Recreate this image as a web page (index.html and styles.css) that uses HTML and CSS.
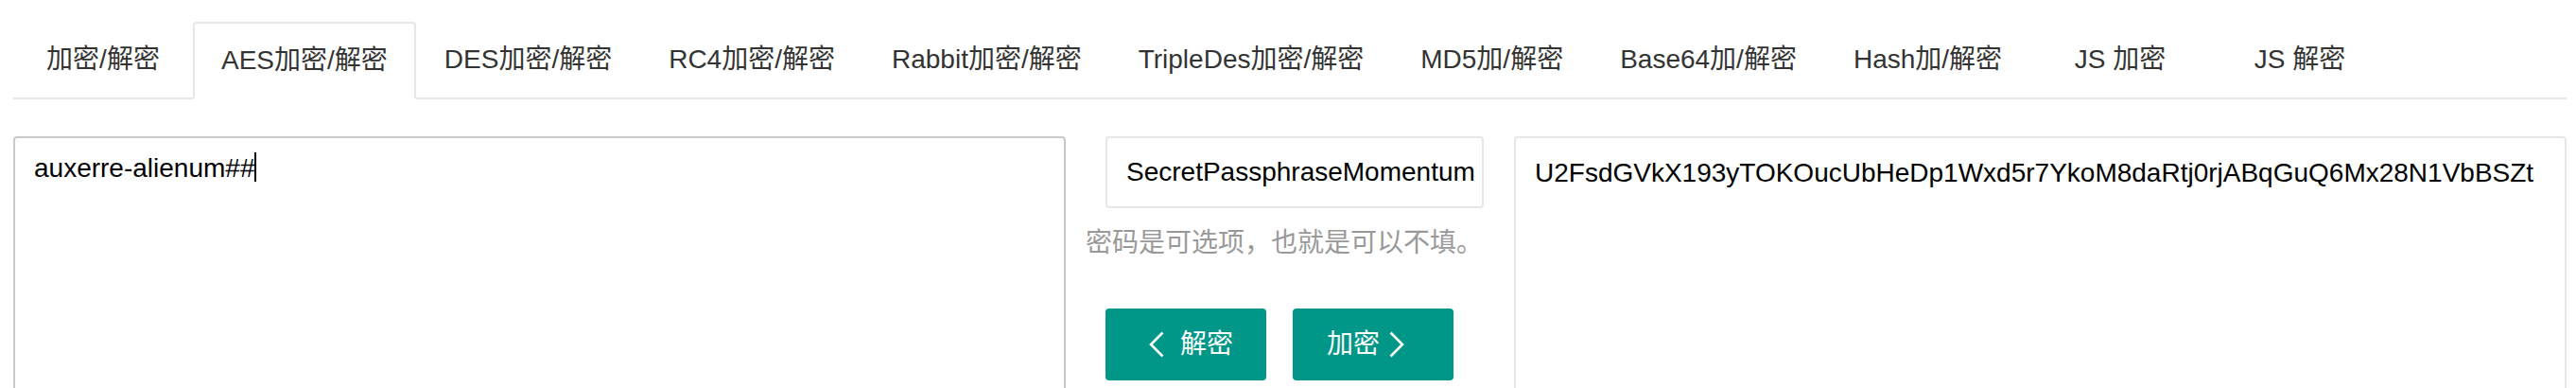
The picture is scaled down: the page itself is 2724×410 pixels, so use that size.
FILE: index.html
```html
<!DOCTYPE html>
<html lang="zh-CN">
<head>
<meta charset="utf-8">
<title>AES加密/解密</title>
<link rel="stylesheet" href="styles.css">
</head>
<body>
<div class="page">
  <ul class="tabs">
    <li class="tab">加密/解密</li>
    <li class="tab active">AES加密/解密</li>
    <li class="tab">DES加密/解密</li>
    <li class="tab">RC4加密/解密</li>
    <li class="tab">Rabbit加密/解密</li>
    <li class="tab">TripleDes加密/解密</li>
    <li class="tab">MD5加/解密</li>
    <li class="tab">Base64加/解密</li>
    <li class="tab">Hash加/解密</li>
    <li class="tab">JS 加密</li>
    <li class="tab">JS 解密</li>
  </ul>
  <div class="panel">
    <div class="box box-focus">auxerre-alienum##<span class="caret"></span></div>
    <div class="middle">
      <input class="pass" type="text" value="SecretPassphraseMomentum">
      <div class="hint">密码是可选项，也就是可以不填。</div>
      <div class="actions">
        <button class="btn btn-dec"><svg class="chev" width="16" height="28" viewBox="0 0 16 28"><polyline points="14.5,1.5 2,14 14.5,26.5" fill="none" stroke="#fff" stroke-width="2.6"/></svg><span class="btn-text">解密</span></button>
        <button class="btn btn-enc"><span class="btn-text">加密</span><svg class="chev chev-r" width="16" height="28" viewBox="0 0 16 28"><polyline points="1.5,1.5 14,14 1.5,26.5" fill="none" stroke="#fff" stroke-width="2.6"/></svg></button>
      </div>
    </div>
    <div class="box">U2FsdGVkX193yTOKOucUbHeDp1Wxd5r7YkoM8daRtj0rjABqGuQ6Mx28N1VbBSZt</div>
  </div>
</div>
</body>
</html>
```
FILE: styles.css
```css
* { box-sizing: border-box; }
html, body {
  margin: 0;
  padding: 0;
  background: #fff;
  overflow: hidden;
}
body {
  font-family: "Liberation Sans", "Noto Sans CJK SC", sans-serif;
  color: #333;
}
.page {
  padding: 23px 10px 0 14px;
}
.tabs {
  list-style: none;
  margin: 0;
  padding: 0;
  display: flex;
  align-items: flex-end;
  height: 82px;
  border-bottom: 2px solid #e6e6e6;
}
.tab {
  min-width: 190px;
  height: 80px;
  line-height: 80px;
  padding: 0 30px;
  font-size: 28px;
  text-align: center;
  white-space: nowrap;
  color: #333;
}
.tab.active {
  height: 82px;
  line-height: 78px;
  padding: 0 28px;
  margin-bottom: -2px;
  border: 2px solid #e6e6e6;
  border-bottom-color: #fff;
  border-radius: 4px 4px 0 0;
  background: #fff;
}
.panel {
  margin-top: 39px;
  display: grid;
  grid-template-columns: 1113px 1fr 1113px;
  align-items: start;
}
.box {
  height: 420px;
  border: 2px solid #e6e6e6;
  border-radius: 4px;
  padding: 17px 20px;
  font-size: 28px;
  line-height: 40px;
  color: #000;
  white-space: nowrap;
  overflow: hidden;
}
.box-focus {
  border-color: #c9c9c9;
  padding-top: 12px;
}
.caret {
  display: inline-block;
  width: 2px;
  height: 31px;
  background: #000;
  vertical-align: -5px;
}
.middle {
  display: flex;
  flex-direction: column;
  align-items: flex-start;
  padding-left: 21px;
}
.pass {
  margin-left: 21px;
  width: 400px;
  height: 76px;
  border: 2px solid #e6e6e6;
  border-radius: 4px;
  padding: 0 4px 0 20px;
  font-family: "Liberation Sans", "Noto Sans CJK SC", sans-serif;
  font-size: 28px;
  color: #000;
  background: #fff;
  outline: none;
}
.hint {
  margin-top: 17px;
  font-size: 28px;
  line-height: 40px;
  color: #999;
  white-space: nowrap;
}
.actions {
  margin-top: 49px;
  margin-left: 21px;
  display: flex;
  gap: 28px;
}
.btn {
  width: 170px;
  height: 76px;
  border: 0;
  border-radius: 4px;
  background: #009688;
  color: #fff;
  font-family: "Liberation Sans", "Noto Sans CJK SC", sans-serif;
  font-size: 28px;
  display: flex;
  align-items: center;
  padding: 0 0 0 36px;
}
.chev { display: block; flex: none; }
.btn-dec .chev { margin-left: 10px; }
.btn-dec .btn-text { margin-left: 17px; }
.chev-r { margin-left: 10px; }
.btn-text { line-height: 76px; }
```
